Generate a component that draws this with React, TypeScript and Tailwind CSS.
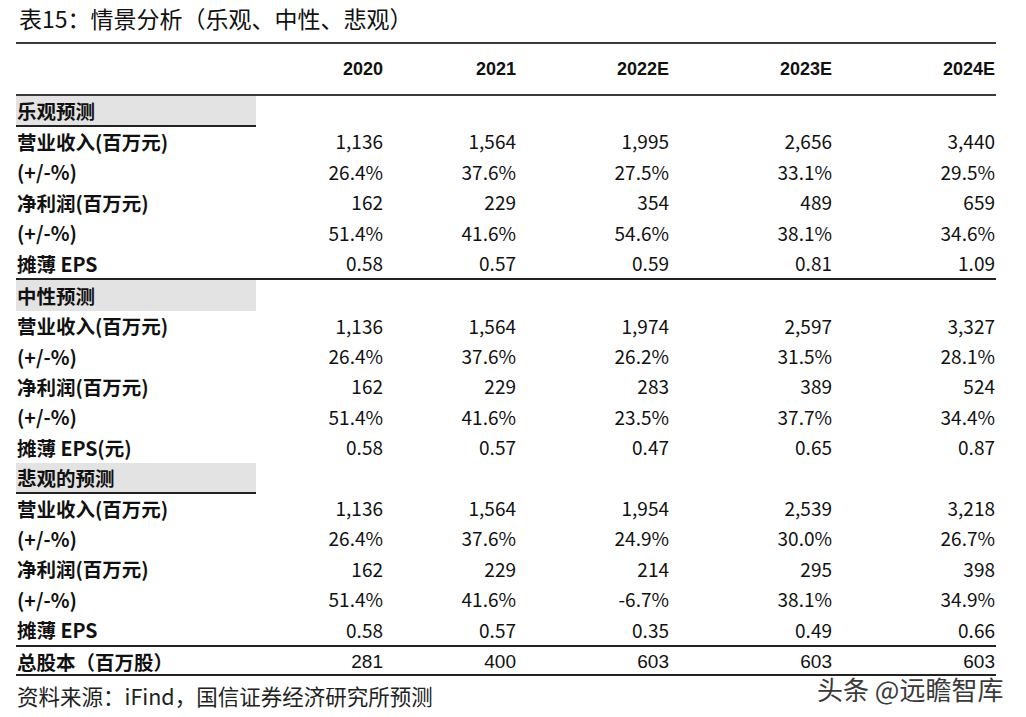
import React from 'react';

const cjk = "font-['Noto_Sans_CJK_SC',sans-serif]";
const arial = "font-['Liberation_Sans','Noto_Sans_CJK_SC',sans-serif]";

type Row = { label: string; values: string[] };

const sections: { title: string; underline: boolean; topLine: boolean; rows: Row[] }[] = [
  {
    title: '乐观预测',
    underline: true,
    topLine: false,
    rows: [
      { label: '营业收入(百万元)', values: ['1,136', '1,564', '1,995', '2,656', '3,440'] },
      { label: '(+/-%)', values: ['26.4%', '37.6%', '27.5%', '33.1%', '29.5%'] },
      { label: '净利润(百万元)', values: ['162', '229', '354', '489', '659'] },
      { label: '(+/-%)', values: ['51.4%', '41.6%', '54.6%', '38.1%', '34.6%'] },
      { label: '摊薄 EPS', values: ['0.58', '0.57', '0.59', '0.81', '1.09'] },
    ],
  },
  {
    title: '中性预测',
    underline: false,
    topLine: true,
    rows: [
      { label: '营业收入(百万元)', values: ['1,136', '1,564', '1,974', '2,597', '3,327'] },
      { label: '(+/-%)', values: ['26.4%', '37.6%', '26.2%', '31.5%', '28.1%'] },
      { label: '净利润(百万元)', values: ['162', '229', '283', '389', '524'] },
      { label: '(+/-%)', values: ['51.4%', '41.6%', '23.5%', '37.7%', '34.4%'] },
      { label: '摊薄 EPS(元)', values: ['0.58', '0.57', '0.47', '0.65', '0.87'] },
    ],
  },
  {
    title: '悲观的预测',
    underline: true,
    topLine: false,
    rows: [
      { label: '营业收入(百万元)', values: ['1,136', '1,564', '1,954', '2,539', '3,218'] },
      { label: '(+/-%)', values: ['26.4%', '37.6%', '24.9%', '30.0%', '26.7%'] },
      { label: '净利润(百万元)', values: ['162', '229', '214', '295', '398'] },
      { label: '(+/-%)', values: ['51.4%', '41.6%', '-6.7%', '38.1%', '34.9%'] },
      { label: '摊薄 EPS', values: ['0.58', '0.57', '0.35', '0.49', '0.66'] },
    ],
  },
];

const years = ['2020', '2021', '2022E', '2023E', '2024E'];
const gridCols = 'grid grid-cols-[240px_128px_133px_153px_163px_163px]';

export default function App() {
  return (
    <div className="relative w-[1026px] h-[717px] bg-white text-[#111] overflow-hidden">
      {/* title */}
      <div className={`h-[42px] pl-[19px] pt-[3px] text-[23px] leading-[30px] ${cjk}`}>
        表15：情景分析（乐观、中性、悲观）
      </div>

      <div className="ml-[16px] w-[980px]">
        {/* header */}
        <div className={`${gridCols} h-[54px] border-t-2 border-b-2 border-[#3a3a3a] items-center`}>
          <div />
          {years.map(y => (
            <div key={y} className={`text-right pr-[1px] text-[18px] font-bold ${arial}`}>
              {y}
            </div>
          ))}
        </div>

        {sections.map(sec => (
          <div key={sec.title} className={sec.topLine ? 'border-t-2 border-[#222]' : ''}>
            <div className={`${gridCols} h-[30.4px]`}>
              <div
                className={`bg-[#e3e3e3] flex items-center pl-[1px] text-[19.5px] font-bold ${cjk} ${
                  sec.underline ? 'border-b-2 border-[#222]' : ''
                }`}
              >
                {sec.title}
              </div>
            </div>
            {sec.rows.map((r, i) => (
              <div key={i} className={`${gridCols} h-[30.4px] items-center`}>
                <div className={`pl-[1px] text-[19.5px] font-bold ${cjk}`}>{r.label}</div>
                {r.values.map((v, j) => (
                  <div key={j} className={`text-right pr-[1px] text-[19px] ${cjk}`}>
                    {v}
                  </div>
                ))}
              </div>
            ))}
          </div>
        ))}

        {/* total shares */}
        <div className={`${gridCols} h-[31px] items-center border-t-2 border-b-2 border-[#222]`}>
          <div className={`pl-[1px] text-[19.5px] font-bold ${cjk}`}>总股本（百万股）</div>
          {['281', '400', '603', '603', '603'].map((v, j) => (
            <div key={j} className={`text-right pr-[1px] text-[19px] leading-[24px] ${arial}`}>
              {v}
            </div>
          ))}
        </div>

        {/* source */}
        <div className={`h-[40px] flex items-center pl-[1px] text-[21.5px] text-[#222] ${cjk}`}>
          资料来源：iFind，国信证券经济研究所预测
        </div>
      </div>

      {/* watermark */}
      <div
        className={`absolute left-[817px] top-[677px] text-[26px] leading-[24px] text-[#3a3a3a] [text-shadow:0_0_2px_#fff,0_0_2px_#fff] ${cjk}`}
      >
        头条 @远瞻智库
      </div>
    </div>
  );
}
